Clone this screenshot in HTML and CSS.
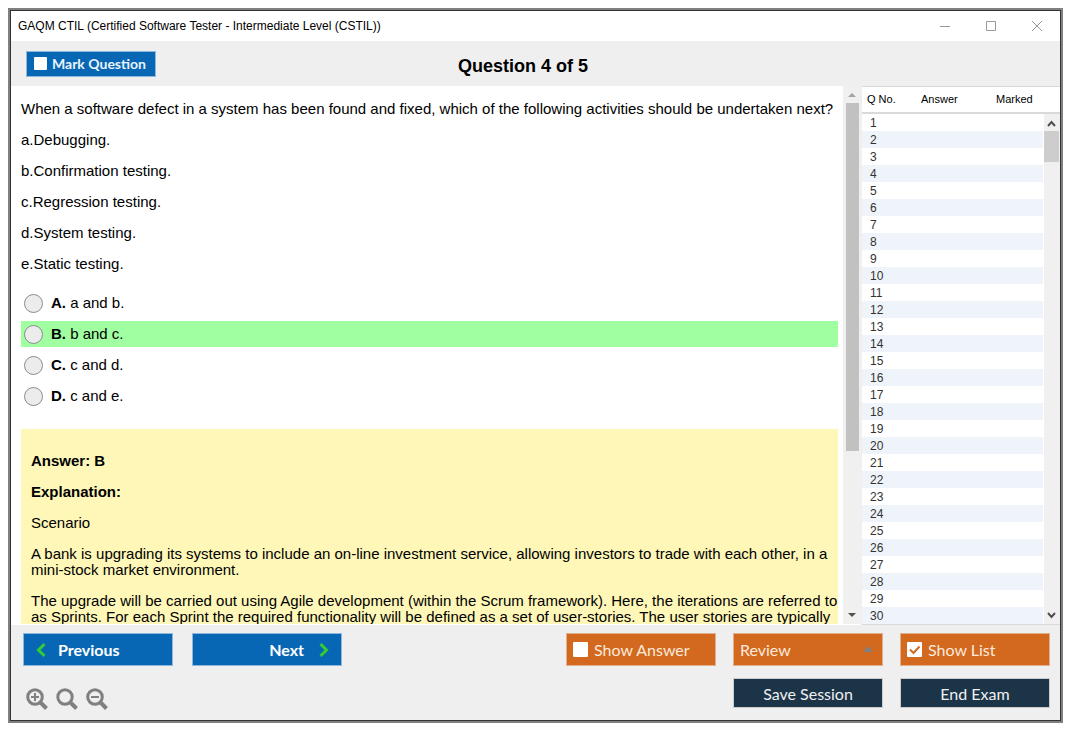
FILE: index.html
```html
<!DOCTYPE html>
<html lang="en">
<head>
  <meta charset="UTF-8">
  <meta name="viewport" content="width=device-width, initial-scale=1">
  <title>GAQM CTIL (Certified Software Tester - Intermediate Level (CSTIL))</title>
  <link rel="stylesheet" href="styles.css">
</head>
<body>

<div class="window">
  <div class="titlebar">
    <span>GAQM CTIL (Certified Software Tester - Intermediate Level (CSTIL))</span>
    <div class="window-controls">
      <button type="button" aria-label="Minimize"><svg width="12" height="12" viewBox="0 0 12 12"><path d="M1 6.500h10"/></svg></button>
      <button type="button" aria-label="Maximize"><svg width="12" height="12" viewBox="0 0 12 12"><path d="M1.500 1.500h9v9h-9z"/></svg></button>
      <button type="button" aria-label="Close"><svg width="12" height="12" viewBox="0 0 12 12"><path d="M1 1l10 10M11 1L1 11"/></svg></button>
    </div>
  </div>

  <header class="header">
    <label class="mark"><input type="checkbox" class="check small">Mark Question</label>
    <h1>Question 4 of 5</h1>
  </header>

  <main class="main">
    <section class="question">
      <div class="question-text">
        <p>When a software defect in a system has been found and fixed, which of the following activities should be undertaken next?</p>
        <p>a.Debugging.</p>
        <p>b.Confirmation testing.</p>
        <p>c.Regression testing.</p>
        <p>d.System testing.</p>
        <p>e.Static testing.</p>

        <div class="options">
          <label class="option"><input type="radio" name="option"><span><b>A.</b> a and b.</span></label>
          <label class="option correct"><input type="radio" name="option"><span><b>B.</b> b and c.</span></label>
          <label class="option"><input type="radio" name="option"><span><b>C.</b> c and d.</span></label>
          <label class="option"><input type="radio" name="option"><span><b>D.</b> c and e.</span></label>
        </div>

        <div class="answer">
          <p><b>Answer: B</b></p>
          <p><b>Explanation:</b></p>
          <p>Scenario</p>
          <p>A bank is upgrading its systems to include an on-line investment service, allowing investors to trade with each other, in a mini-stock market environment.</p>
          <p>The upgrade will be carried out using Agile development (within the Scrum framework). Here, the iterations are referred to as Sprints. For each Sprint the required functionality will be defined as a set of user-stories. The user stories are typically</p>
        </div>
      </div>
      <div class="scrollbar">
        <svg class="arrow muted" width="8" height="17" viewBox="0 0 8 17"><path d="M0 11l4-4 4 4z"/></svg>
        <div class="track"><div class="thumb"></div></div>
        <svg class="arrow" width="8" height="17" viewBox="0 0 8 17"><path d="M0 6h8l-4 4z"/></svg>
      </div>
    </section>

    <aside class="list">
      <table>
        <thead>
          <tr><th class="col-no">Q No.</th><th class="col-answer">Answer</th><th>Marked</th></tr>
        </thead>
        <tbody id="rows"></tbody>
      </table>
      <div class="list-scrollbar">
        <svg width="15" height="17" viewBox="0 0 15 17"><path d="M4 12l3.500-4 3.500 4"/></svg>
        <div class="track"><div class="thumb"></div></div>
        <svg width="15" height="17" viewBox="0 0 15 17"><path d="M4 6l3.500 4L11 6"/></svg>
      </div>
    </aside>
  </main>

  <footer class="footer">
    <div class="row">
      <button type="button" class="btn nav">
        <svg width="10" height="16" viewBox="0 0 10 16"><path d="M8.500 2L2.500 8l6 6"/></svg>Previous
      </button>
      <button type="button" class="btn nav next">
        Next<svg width="10" height="16" viewBox="0 0 10 16"><path d="M1.500 2l6 6-6 6"/></svg>
      </button>
      <div class="right">
        <label class="btn orange"><input type="checkbox" class="check">Show Answer</label>
        <div class="review">
          <select class="btn orange" aria-label="Review"><option>Review</option></select>
        </div>
        <label class="btn orange"><input type="checkbox" class="check" checked>Show List</label>
      </div>
    </div>
    <div class="row">
      <div class="zoom">
        <button type="button" aria-label="Zoom in"><svg width="22" height="22" viewBox="0 0 22 22"><circle cx="9" cy="9" r="7.300"/><path class="handle" d="M14.500 14.500l6 6"/><path class="sign" d="M5 9h8M9 5v8"/></svg></button>
        <button type="button" aria-label="Reset zoom"><svg width="22" height="22" viewBox="0 0 22 22"><circle cx="9" cy="9" r="7.200"/><path class="handle" d="M14.500 14.500l6 6"/></svg></button>
        <button type="button" aria-label="Zoom out"><svg width="22" height="22" viewBox="0 0 22 22"><circle cx="9" cy="9" r="7.300"/><path class="handle" d="M14.500 14.500l6 6"/><path class="sign" d="M5 9h8"/></svg></button>
      </div>
      <div class="right">
        <button type="button" class="btn dark">Save Session</button>
        <button type="button" class="btn dark">End Exam</button>
      </div>
    </div>
  </footer>
</div>

<script>
  const rows = document.getElementById('rows');
  for (let i = 1; i <= 30; i++) {
    const row = rows.insertRow();
    row.insertCell().textContent = i;
    row.insertCell();
    row.insertCell();
  }
</script>

</body>
</html>
```

FILE: styles.css
```css
* {
  box-sizing: border-box;
}

body {
  margin: 0;
  padding: 8px 12px 12px 8px;
  height: 100vh;
  background-color: #fff;
  font-family: "Liberation Sans", Arial, sans-serif;
  color: #000;
}

.window {
  display: flex;
  flex-direction: column;
  height: 100%;
  padding: 1px;
  border: 2px solid #808080;
  background-color: #333;
}

/* title bar */
.titlebar {
  display: flex;
  align-items: center;
  justify-content: space-between;
  height: 30px;
  padding: 0 17px 0 7px;
  background-color: #fff;
  font-size: 12px;
}

.window-controls {
  display: flex;
  gap: 34px;
}

.window-controls button,
.zoom button {
  display: flex;
  padding: 0;
  border: none;
  background: none;
}

.window-controls svg {
  fill: none;
  stroke: #999;
}

/* header */
.header {
  display: grid;
  grid-template-columns: 130px 1fr 155px;
  align-items: center;
  height: 45px;
  padding: 0 15px;
  background-color: #efefef;
}

.header h1 {
  margin: 4px 0 0;
  font-size: 18px;
  line-height: 20px;
  text-align: center;
}

.mark {
  display: flex;
  align-items: center;
  gap: 5px;
  height: 26px;
  padding: 0 7px;
  border: 1px solid #8db8dc;
  background-color: #0867b5;
  color: #eaf3fb;
  font-family: Lato, sans-serif;
  font-size: 14px;
  font-weight: bold;
  white-space: nowrap;
}

.check {
  appearance: none;
  flex: none;
  width: 15px;
  height: 15px;
  margin: 0;
  border-radius: 1px;
  background-color: #fff;
}

.check.small {
  width: 13px;
  height: 13px;
}

.check:checked {
  background-image: url("data:image/svg+xml,%3Csvg xmlns='http://www.w3.org/2000/svg' viewBox='0 0 15 15'%3E%3Cpath d='M3 7.500l3.500 3.500L12.500 4.500' fill='none' stroke='%23d2691e' stroke-width='2'/%3E%3C/svg%3E");
}

/* question */
.main {
  display: flex;
  flex: 1;
  min-height: 0;
  background-color: #fff;
}

.question {
  display: flex;
  flex: 1;
  min-width: 0;
  border-bottom: 1px solid #fff;
}

.question-text {
  flex: 1;
  padding: 15px 5px 0 10px;
  overflow: hidden;
  font-size: 15px;
  line-height: 16px;
}

.question-text p {
  margin: 0 0 15px;
}

.options {
  display: flex;
  flex-direction: column;
  gap: 5px;
  margin: 18px 0 20px;
}

.option {
  display: flex;
  align-items: center;
  gap: 8px;
  height: 26px;
  padding-left: 3px;
}

.option.correct {
  background-color: #a0ffa0;
}

.option input {
  appearance: none;
  width: 19px;
  height: 19px;
  margin: 0;
  border: 1px solid #8c8c8c;
  border-radius: 50%;
  background-color: #ececec;
}

.answer {
  padding: 24px 0 0 10px;
  background-color: #fef7b8;
}

.scrollbar {
  display: flex;
  flex-direction: column;
  align-items: center;
  width: 18px;
  background-color: #f0f0f0;
}

.arrow {
  fill: #505050;
}

.arrow.muted {
  fill: #a3a3a3;
}

.track {
  flex: 1;
}

.scrollbar .thumb {
  width: 13px;
  height: 69%;
  background-color: #c1c1c1;
}

/* question list */
.list {
  position: relative;
  width: 199px;
  overflow: hidden;
  border-left: 1px solid #efefef;
  border-bottom: 1px solid #d9d9d9;
}

.list table {
  width: 100%;
  table-layout: fixed;
  border-collapse: separate;
  border-spacing: 0;
}

.list th {
  height: 28px;
  padding: 0 5px 2px;
  border-top: 1px solid #d9d9d9;
  border-bottom: 2px solid #d9d9d9;
  font-size: 11px;
  font-weight: normal;
  text-align: left;
}

.col-no {
  width: 54px;
}

.col-answer {
  width: 75px;
}

.list td {
  height: 17px;
  padding: 1px 8px 0;
  color: #333;
  font-size: 12px;
  line-height: 16px;
}

.list tbody tr:nth-child(even) {
  background-color: #eef4f9;
}

.list-scrollbar {
  position: absolute;
  top: 28px;
  right: 0;
  bottom: 0;
  display: flex;
  flex-direction: column;
  width: 17px;
  border-left: 1px solid #fff;
  background-color: #f0f0f0;
}

.list-scrollbar svg {
  fill: none;
  stroke: #505050;
  stroke-width: 2;
}

.list-scrollbar .thumb {
  width: 15px;
  height: 31px;
  background-color: #cdcdcd;
}

/* footer */
.footer {
  display: flex;
  flex-direction: column;
  gap: 12px;
  padding: 8px 10px 10px 12px;
  background-color: #efefef;
}

.row {
  display: flex;
  align-items: flex-start;
  gap: 19px;
}

.right {
  display: flex;
  gap: 17px;
  margin-left: auto;
}

.btn {
  display: flex;
  align-items: center;
  width: 150px;
  height: 33px;
  padding: 0 7px;
  border: 1px solid #ccc;
  border-radius: 0;
  font-family: Lato, sans-serif;
  font-size: 16px;
}

.btn.nav {
  gap: 12px;
  padding: 0 12px;
  border-color: #8db8dc;
  background-color: #0867b5;
  color: #fff;
  font-weight: bold;
}

.btn.next {
  justify-content: flex-end;
  gap: 15px;
}

.nav svg {
  fill: none;
  stroke: #32cd32;
  stroke-width: 3;
}

.btn.orange {
  gap: 6px;
  padding: 0 6px;
  border-color: #e0b08c;
  background-color: #d2691e;
  color: #fbe9dc;
}

.review {
  position: relative;
}

.review select {
  appearance: none;
}

.review::after {
  content: "";
  position: absolute;
  top: 13px;
  right: 10px;
  border: 5px solid transparent;
  border-top: none;
  border-bottom: 6px solid #808080;
  pointer-events: none;
}

.btn.dark {
  justify-content: center;
  height: 30px;
  background-color: #1b3448;
  color: #f0f0f0;
}

.zoom {
  display: flex;
  gap: 8px;
  padding: 10px 0 0 3px;
}

.zoom svg {
  fill: none;
  stroke: #808080;
  stroke-width: 3;
}

.zoom .handle {
  stroke-width: 4;
}

.zoom .sign {
  stroke-width: 2;
}
```
